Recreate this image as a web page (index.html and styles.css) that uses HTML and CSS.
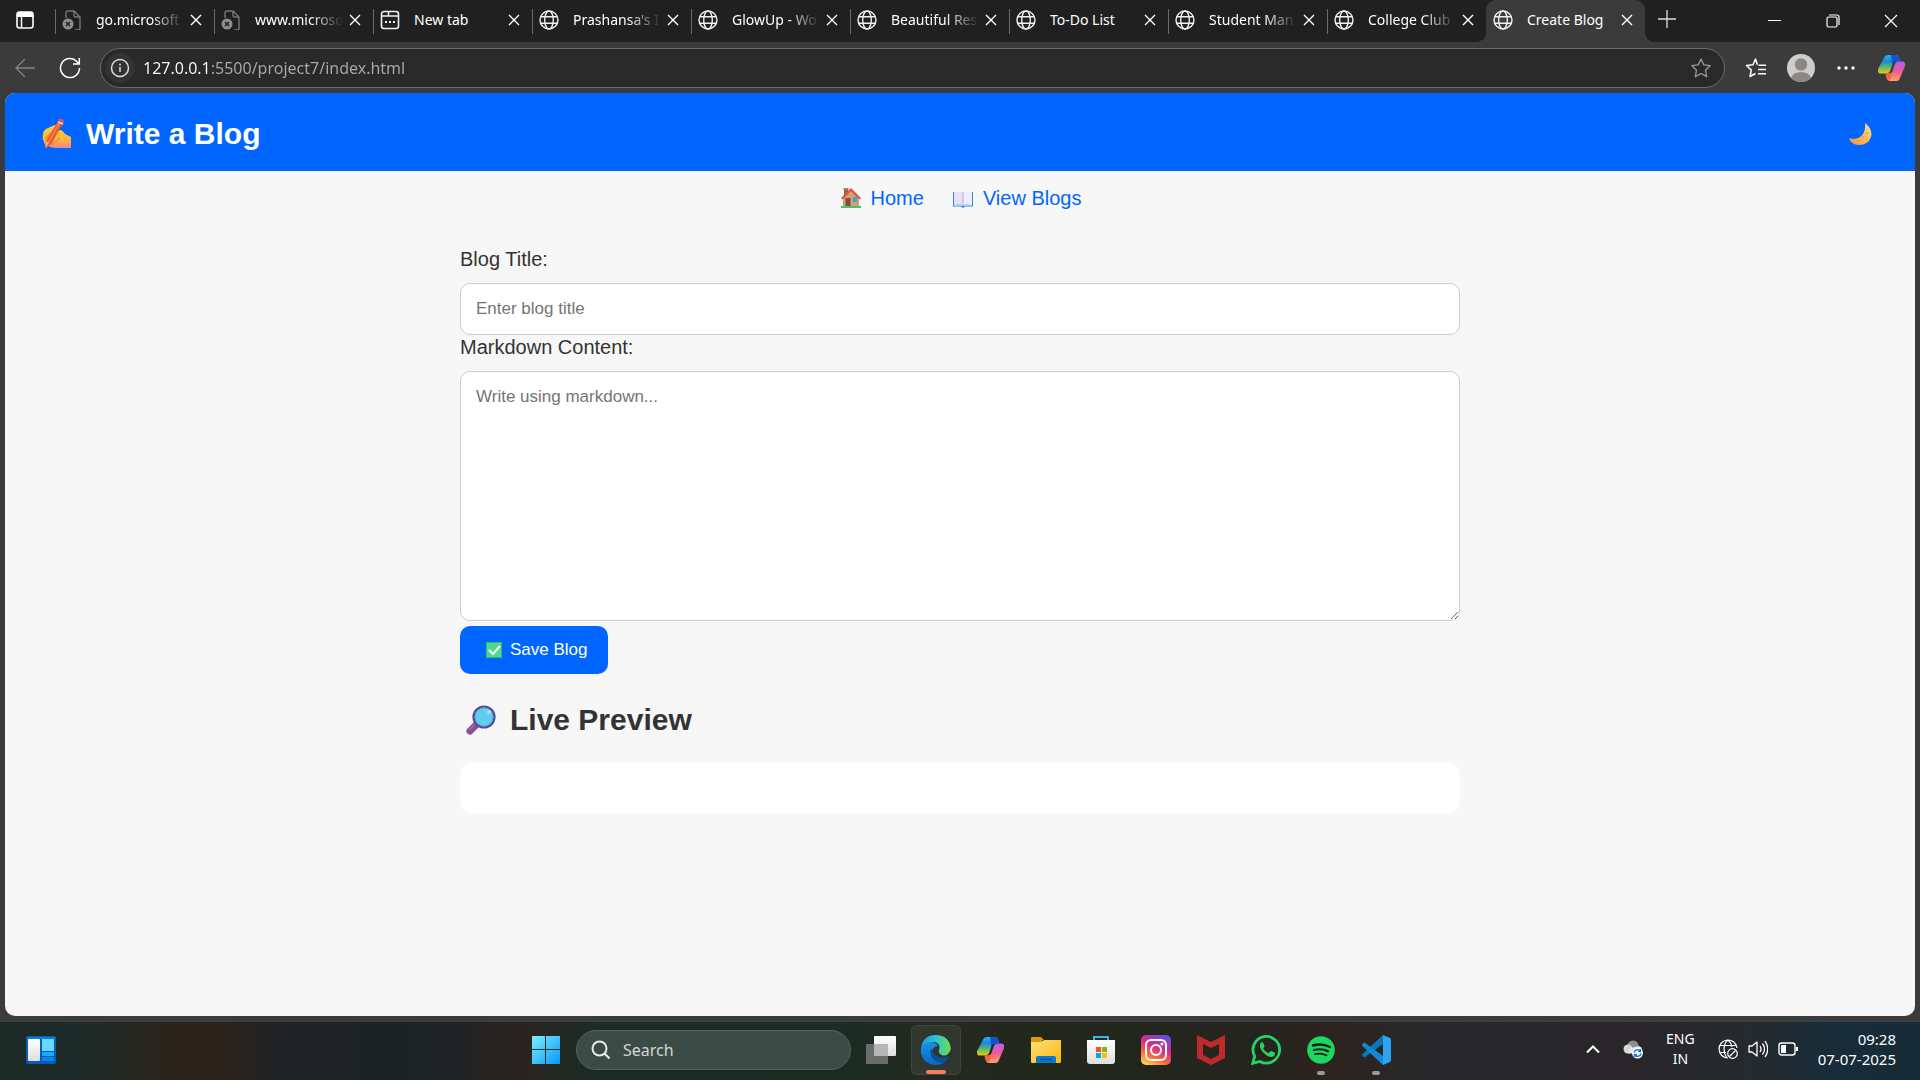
FILE: index.html
```html
<!DOCTYPE html>
<html lang="en">
<head>
<meta charset="utf-8">
<meta name="viewport" content="width=device-width, initial-scale=1">
<title>Create Blog</title>
<link rel="stylesheet" href="styles.css">
</head>
<body>
<svg class="defs" aria-hidden="true">
  <defs>
    <linearGradient id="cp-a" x1="0" y1="0" x2="0" y2="1"><stop offset="0" stop-color="#1fb4f4"/><stop offset=".35" stop-color="#1a8ad8"/><stop offset=".7" stop-color="#6cbf5a"/><stop offset="1" stop-color="#f0c80c"/></linearGradient>
    <linearGradient id="cp-b" x1="0" y1="0" x2="0" y2="1"><stop offset="0" stop-color="#b060f4"/><stop offset=".5" stop-color="#ee5a94"/><stop offset="1" stop-color="#ffa35c"/></linearGradient>
    <linearGradient id="win" x1="0" y1="0" x2="1" y2="1"><stop offset="0" stop-color="#7cf0ff"/><stop offset="1" stop-color="#0a94f8"/></linearGradient>
    <linearGradient id="edge-a" x1="0" y1="0" x2="1" y2="0"><stop offset="0" stop-color="#1d9be0"/><stop offset=".5" stop-color="#2cc3d4"/><stop offset="1" stop-color="#6fe04a"/></linearGradient>
    <linearGradient id="edge-b" x1="0" y1="0" x2="0" y2="1"><stop offset="0" stop-color="#1894e0"/><stop offset="1" stop-color="#0868c8"/></linearGradient>
    <linearGradient id="folder" x1="0" y1="0" x2="1" y2="1"><stop offset="0" stop-color="#ffe07a"/><stop offset="1" stop-color="#f8b80c"/></linearGradient>
    <linearGradient id="pale" x1="0" y1="0" x2="0" y2="1"><stop offset="0" stop-color="#ffffff"/><stop offset="1" stop-color="#dedede"/></linearGradient>
    <linearGradient id="insta" x1=".2" y1="1" x2=".7" y2="0"><stop offset="0" stop-color="#ffd056"/><stop offset=".3" stop-color="#fb6a3a"/><stop offset=".6" stop-color="#d92c84"/><stop offset="1" stop-color="#6a48d8"/></linearGradient>
    <linearGradient id="hand" x1="0" y1="0" x2="0" y2="1"><stop offset="0" stop-color="#ffd23c"/><stop offset=".65" stop-color="#fcb53e"/><stop offset="1" stop-color="#f4848c"/></linearGradient>
    <linearGradient id="moon" x1="1" y1="0" x2="0" y2="1"><stop offset="0" stop-color="#ffe38c"/><stop offset="1" stop-color="#f98e36"/></linearGradient>
    <symbol id="globe" viewBox="0 0 20 20"><g fill="none" stroke="currentColor" stroke-width="1.4"><circle cx="10" cy="10" r="9"/><ellipse cx="10" cy="10" rx="4.3" ry="9"/><path d="M1.8 6.8h16.4M1.8 13.2h16.4"/></g></symbol>
    <symbol id="badpage" viewBox="0 0 20 20"><path d="M4 8V3a2 2 0 0 1 2-2h6l6 6v11a2 2 0 0 1-2 2h-3M12 1v4.500a1.500 1.500 0 0 0 1.500 1.500H18" fill="none" stroke="#777" stroke-width="1.4"/><circle cx="6" cy="14" r="5.500" fill="#8d8d8d"/><path d="M4 12l4 4M8 12l-4 4" stroke="#202020" stroke-width="1.500"/></symbol>
    <symbol id="newtab" viewBox="0 0 20 20"><path d="M1.500 4a2.500 2.500 0 0 1 2.500-2.500h12A2.500 2.500 0 0 1 18.500 4v12a2.500 2.500 0 0 1-2.500 2.500H4A2.500 2.500 0 0 1 1.500 16zM2 6h6.500V2M8.500 6H18" fill="none" stroke="currentColor" stroke-width="1.600"/><path d="M5 11h2v2H5zM9 11h2v2H9zM13 11h2v2h-2z" fill="currentColor"/></symbol>
    <symbol id="cross" viewBox="0 0 12 12"><path d="M1 1l10 10M11 1L1 11" stroke="currentColor" stroke-width="1.400" fill="none"/></symbol>
    <symbol id="copilot" viewBox="0 0 30 28"><path d="M7 2q1-2 4-2h8q3 0 4 4l1 3h-5q-3 0-4 4l-2 6q-1 3-5 3H3q-4 0-3-5z" fill="url(#cp-a)"/><path d="M14 0h5q3 0 4 4l1 3h-5q-3 0-4 3z" fill="#1454d4"/><path d="M23 26q-1 2-4 2h-6q-3 0-4-4l-1-4h4q3 0 4-4l2-6q1-3 5-3h3q4 0 3 5z" fill="url(#cp-b)"/><path d="M8 20h4q3 0 4-3l-3 10q-3 0-4-3z" fill="#f4633a"/></symbol>
  </defs>
</svg>

<div class="browser">
  <header class="tabstrip">
    <button class="tab-actions" aria-label="Tab actions"><svg width="18" height="18" viewBox="0 0 18 18"><rect x="1" y="1" width="16" height="16" rx="2.500" fill="none" stroke="#fff" stroke-width="1.600"/><path d="M1 2.500Q1 1 3 1h12q2 0 2 2v3H1z" fill="#fff"/><path d="M5.500 6v11" stroke="#fff" stroke-width="1.500"/></svg></button>
    <div class="tabs">
      <div class="tab"><svg class="tab-icon"><use href="#badpage"/></svg><span class="tab-title tab-faded">go.microsoft</span><button class="tab-close" aria-label="Close tab"><svg><use href="#cross"/></svg></button></div>
      <div class="tab"><svg class="tab-icon"><use href="#badpage"/></svg><span class="tab-title tab-faded">www.microso</span><button class="tab-close" aria-label="Close tab"><svg><use href="#cross"/></svg></button></div>
      <div class="tab"><svg class="tab-icon"><use href="#newtab"/></svg><span class="tab-title">New tab</span><button class="tab-close" aria-label="Close tab"><svg><use href="#cross"/></svg></button></div>
      <div class="tab"><svg class="tab-icon"><use href="#globe"/></svg><span class="tab-title tab-faded">Prashansa's I</span><button class="tab-close" aria-label="Close tab"><svg><use href="#cross"/></svg></button></div>
      <div class="tab"><svg class="tab-icon"><use href="#globe"/></svg><span class="tab-title tab-faded">GlowUp - Wo</span><button class="tab-close" aria-label="Close tab"><svg><use href="#cross"/></svg></button></div>
      <div class="tab"><svg class="tab-icon"><use href="#globe"/></svg><span class="tab-title tab-faded">Beautiful Res</span><button class="tab-close" aria-label="Close tab"><svg><use href="#cross"/></svg></button></div>
      <div class="tab"><svg class="tab-icon"><use href="#globe"/></svg><span class="tab-title">To-Do List</span><button class="tab-close" aria-label="Close tab"><svg><use href="#cross"/></svg></button></div>
      <div class="tab"><svg class="tab-icon"><use href="#globe"/></svg><span class="tab-title tab-faded">Student Man</span><button class="tab-close" aria-label="Close tab"><svg><use href="#cross"/></svg></button></div>
      <div class="tab"><svg class="tab-icon"><use href="#globe"/></svg><span class="tab-title tab-faded">College Club</span><button class="tab-close" aria-label="Close tab"><svg><use href="#cross"/></svg></button></div>
      <div class="tab tab-active"><svg class="tab-icon"><use href="#globe"/></svg><span class="tab-title">Create Blog</span><button class="tab-close" aria-label="Close tab"><svg><use href="#cross"/></svg></button></div>
    </div>
    <button class="new-tab" aria-label="New tab"><svg width="18" height="18" viewBox="0 0 18 18"><path d="M9 0v18M0 9h18" stroke="#ddd" stroke-width="1.300"/></svg></button>
    <div class="window-controls">
      <button aria-label="Minimize"><svg width="14" height="14" viewBox="0 0 14 14"><path d="M0 6.500h13" stroke="#fff"/></svg></button>
      <button aria-label="Restore"><svg width="14" height="14" viewBox="0 0 14 14"><g fill="none" stroke="#fff" stroke-width="1.200"><rect x="1" y="3" width="10" height="10" rx="1.500"/><path d="M3 1h8a2 2 0 0 1 2 2v8"/></g></svg></button>
      <button aria-label="Close window"><svg width="14" height="14" viewBox="0 0 14 14"><path d="M1 1l12 12M13 1L1 13" stroke="#fff" stroke-width="1.200"/></svg></button>
    </div>
  </header>

  <div class="toolbar">
    <button class="tool back" aria-label="Back"><svg width="20" height="20" viewBox="0 0 20 20"><path d="M20 10H1M10 1l-9 9 9 9" fill="none" stroke="#858585" stroke-width="1.300"/></svg></button>
    <button class="tool reload" aria-label="Refresh"><svg width="22" height="22" viewBox="0 0 22 22"><path d="M20.500 11A9.500 9.500 0 1 1 17.800 4.400L20 7M20.300 1v6H14" fill="none" stroke="#fff" stroke-width="1.500"/></svg></button>
    <div class="address">
      <button class="site-info" aria-label="Site information"><svg width="20" height="20" viewBox="0 0 20 20"><circle cx="10" cy="10" r="8.500" fill="none" stroke="#ddd" stroke-width="1.500"/><path d="M10 9v5" stroke="#ddd" stroke-width="1.500"/><circle cx="10" cy="6.500" r="1" fill="#ddd"/></svg></button>
      <input class="url" type="text" aria-label="Address" value="127.0.0.1:5500/project7/index.html">
      <button class="star" aria-label="Add to favorites"><svg width="22" height="22" viewBox="0 0 22 22"><path d="M11 2l2.800 5.900 6.300.8-4.600 4.500 1.200 6.400L11 16.500l-5.700 3.100 1.200-6.400L1.900 8.700l6.300-.8z" fill="none" stroke="#9a9a9a" stroke-width="1.300" stroke-linejoin="round"/></svg></button>
    </div>
    <div class="toolbar-end">
      <button class="tool" aria-label="Favorites"><svg width="22" height="22" viewBox="0 0 22 22"><path d="M12.500 7.700L10.500 2 8 7.700 1.500 8.500l4.800 4.600L5 19.500l5.500-3M13.500 8.200H21M13 12.500h8M13 16.700h8" fill="none" stroke="#fff" stroke-width="1.500" stroke-linejoin="round"/></svg></button>
      <button class="tool" aria-label="Profile"><svg width="28" height="28" viewBox="0 0 28 28"><circle cx="14" cy="14" r="14" fill="#cfcdca"/><circle cx="14" cy="10.500" r="6.200" fill="#8b8785"/><path d="M4 24q2-6 10-6t10 6q-4 4-10 4T4 24z" fill="#8b8785"/></svg></button>
      <button class="tool" aria-label="Settings and more"><svg width="18" height="6" viewBox="0 0 18 6"><g fill="#fff"><circle cx="2" cy="3" r="1.700"/><circle cx="9" cy="3" r="1.700"/><circle cx="16" cy="3" r="1.700"/></g></svg></button>
      <button class="tool tool-copilot" aria-label="Copilot"><svg width="28" height="26"><use href="#copilot"/></svg></button>
    </div>
  </div>

  <div class="page">
    <header class="blog-header">
      <h1><svg width="30" height="30" viewBox="0 0 30 30" role="img" aria-label="Writing hand"><path d="M1 15q0-4 5-6l7-3q4-1 3 2l-2 4 5-1q2 1 4 4l6 3v11H14q-4 0-8-2-5-2-4-5-2-1-1-7z" fill="url(#hand)"/><path d="M9 14l-6 6M13 17l-7 8M18 19l-8 7" stroke="#e68a2c" stroke-width="1.200"/><path d="M16 2l5 2-11 20-5 5-2-1 1-6z" fill="#ee5a35"/><path d="M18 3L6 24" stroke="#ff8a56" stroke-width="1.300"/><path d="M17 0q3-1 5 2l-1 3-5-2z" fill="#f04e58"/><path d="M16 3l5 2" stroke="#ddd" stroke-width="1.500"/><path d="M4 22l3 2-4 5z" fill="#f4b183"/></svg>Write a Blog</h1>
      <button class="theme" aria-label="Toggle dark mode"><svg width="24" height="24" viewBox="0 0 24 24"><path d="M17 1Q25 7 23 15q-3 8-12 8Q3 23 1 16q9 3 14-4 3-5 2-11z" fill="url(#moon)"/><g fill="#eeaa42"><circle cx="19" cy="11" r="1.200"/><circle cx="15" cy="15" r="1.500"/><circle cx="10" cy="19" r="1.300"/><circle cx="18" cy="18" r="1"/></g></svg></button>
    </header>
    <nav class="blog-nav">
      <a href="#home"><svg width="20" height="20" viewBox="1 1 20 20" aria-hidden="true"><path d="M4 2h4v7H4z" fill="#9a6248"/><path d="M3.500 1h5v2h-5z" fill="#b87a5a"/><path d="M3 10l8-8 8 8v10H3z" fill="#d99f6c"/><path d="M1 11L11 1l10 10-1.500 1.500L11 4l-8.500 8.500z" fill="#e0503c"/><path d="M5.500 11h5v9h-5z" fill="#7a5145"/><path d="M13 10h4v5h-4z" fill="#2ea4ee"/><path d="M1 19h20v2H1z" fill="#46c46c"/></svg>Home</a>
      <a href="#blogs"><svg width="20" height="20" viewBox="1 1 20 20" aria-hidden="true"><path d="M1 5h20v14.500h-8l-2 1.500-2-1.500H1z" fill="#2c8ad0"/><path d="M2 17h18v2H2z" fill="#a8cdee"/><path d="M2 5q5-1 9 0v13q-4-2-9 0z" fill="#e7e0f8"/><path d="M20 5q-5-1-9 0v13q4-2 9 0z" fill="#f2edfd"/><path d="M11 5v13" stroke="#b8b0d0"/></svg>View Blogs</a>
    </nav>
    <main class="editor">
      <form>
        <label for="title">Blog Title:</label>
        <input id="title" class="field" type="text" placeholder="Enter blog title">
        <label for="content">Markdown Content:</label>
        <textarea id="content" class="field" placeholder="Write using markdown..."></textarea>
        <button class="save" type="button"><svg width="16" height="16" viewBox="0 0 16 16" aria-hidden="true"><path d="M0 0h16v16H0z" fill="#38b876"/><path d="M1 1h14v14H1z" fill="#50d890"/><path d="M3 8l4 4 7-8" fill="none" stroke="#fff" stroke-width="2"/></svg>Save Blog</button>
      </form>
      <h2><svg width="30" height="30" viewBox="0 0 30 30" aria-hidden="true"><path d="M12 18l-8 8" stroke="#8c4c96" stroke-width="7" stroke-linecap="round"/><path d="M10 18l-7 7" stroke="#a868ac" stroke-width="1.500"/><circle cx="18" cy="12" r="10.500" fill="#63cdec" stroke="#574a92" stroke-width="2.200"/><circle cx="18" cy="12" r="9" fill="none" stroke="#4cabd8"/><circle cx="23" cy="7" r="2" fill="#a6e4f6"/></svg>Live Preview</h2>
      <section class="preview" aria-label="Live preview"></section>
    </main>
  </div>
</div>

<footer class="taskbar">
  <div class="task-start">
    <button aria-label="Widgets"><svg width="30" height="28" viewBox="0 0 30 28"><rect width="30" height="28" rx="2" fill="#0c5cb0"/><path d="M1 1h28v2H1z" fill="#0c7cd4"/><rect x="2" y="3" width="12" height="22" rx="1" fill="url(#pale)"/><path d="M16 3h12v12H16z" fill="#66d8ff"/><path d="M16 16h12v4H16z" fill="#20a8fc"/><path d="M16 21h12v4H16z" fill="#0488f0"/></svg></button>
  </div>
  <div class="task-apps">
    <button class="app" aria-label="Start"><svg width="30" height="30" viewBox="0 0 30 30"><path d="M1 1h13v13H1zM15 1h14v13H15zM1 15h13v14H1zM15 15h14v14H15z" fill="url(#win)"/></svg></button>
    <label class="search"><svg width="20" height="20" viewBox="0 0 20 20" aria-hidden="true"><circle cx="8.500" cy="8.500" r="7" fill="none" stroke="#e6eaea" stroke-width="2"/><path d="M13.500 13.500l5 5" stroke="#e6eaea" stroke-width="2.300"/></svg><input type="text" placeholder="Search" aria-label="Search"></label>
    <button class="app" aria-label="Task view"><svg width="30" height="28" viewBox="0 0 30 28"><rect x="0" y="8" width="22" height="20" rx="1" fill="#6c6c6c"/><rect x="8" y="0" width="22" height="20" rx="1" fill="url(#pale)"/><path d="M8 8h14v12H8z" fill="#b6b6b6"/></svg></button>
    <button class="app app-current" aria-label="Microsoft Edge"><svg width="30" height="30" viewBox="0 0 30 30"><path d="M0 13Q2 0 15 0q9 0 13 7 4 8-1 12-4 3-8 0-2-2-1-4 2-6-4-8-8-1-14 6z" fill="url(#edge-a)"/><path d="M0 13q5-7 11-6 5 1 6 4-6 0-6 7 1 9 13 9-4 3-9 3Q3 30 0 18z" fill="url(#edge-b)"/><path d="M11 13q-4 5 1 11 6 6 12 3 3-2 4-6-5 3-10 1-8-3-7-9z" fill="#0c4f9c"/></svg></button>
    <button class="app" aria-label="Copilot"><svg width="28" height="26"><use href="#copilot"/></svg></button>
    <button class="app" aria-label="File Explorer"><svg width="30" height="28" viewBox="0 0 30 28"><path d="M0 2q0-1 1-1h9l3 3h-2v5H0z" fill="#dc9a08"/><path d="M0 6h10l3-2h17v22q0 1-1 1H1q-1 0-1-1z" fill="url(#folder)"/><path d="M5 27v-5q0-2 2-2h16q2 0 2 2v5z" fill="#0c78cc"/><path d="M9 23.500h12" stroke="#06539a" stroke-width="1.500"/></svg></button>
    <button class="app" aria-label="Microsoft Store"><svg width="30" height="30" viewBox="0 0 30 30"><path d="M8 7V2h14v5" fill="none" stroke="#2cbcec" stroke-width="2"/><path d="M1 5h28v21q0 3-3 3H4q-3 0-3-3z" fill="url(#pale)"/><path d="M10 12h5v5h-5z" fill="#f1511b"/><path d="M16 12h5v5h-5z" fill="#80bc06"/><path d="M10 18h5v5h-5z" fill="#05a6f0"/><path d="M16 18h5v5h-5z" fill="#fdba08"/></svg></button>
    <button class="app" aria-label="Instagram"><svg width="30" height="30" viewBox="0 0 30 30"><rect width="30" height="30" rx="5" fill="url(#insta)"/><g fill="none" stroke="#fff" stroke-width="2"><rect x="5" y="5" width="20" height="20" rx="5"/><circle cx="15" cy="15" r="5"/></g><circle cx="21" cy="9" r="1.500" fill="#fff"/></svg></button>
    <button class="app" aria-label="McAfee"><svg width="28" height="30" viewBox="0 0 28 30"><path d="M0 0l14 7 14-7v23l-14 7-14-7zM6 9v11l8 4 8-4V9l-8 4z" fill="#c02a2c" fill-rule="evenodd"/></svg></button>
    <button class="app" aria-label="WhatsApp"><svg width="30" height="30" viewBox="0 0 30 30"><path d="M1.700 28.300l2-7A13.300 13.300 0 1 1 9 26.500z" fill="none" stroke="#25d366" stroke-width="2.800"/><path d="M10 7.500q1-1 2 0l1.500 3.500q0 1-1.500 2.500 2 3.500 5.500 4.800l2-2q.5-.5 1.500 0l3 1.500q.5 3-2.500 4-4 1-9-4-5.500-6-2.500-10.300z" fill="#25d366"/></svg></button>
    <button class="app app-open" aria-label="Spotify"><svg width="28" height="28" viewBox="0 0 28 28"><circle cx="14" cy="14" r="13.800" fill="#1ed760"/><g fill="none" stroke="#17241b" stroke-linecap="round"><path d="M6 9.500q9-2.500 17 1.500" stroke-width="2.500"/><path d="M7 14q8-2 14 1.300" stroke-width="2.200"/><path d="M8 18.200q6-1.700 11.500 1.200" stroke-width="1.800"/></g></svg></button>
    <button class="app app-open" aria-label="Visual Studio Code"><svg width="30" height="30" viewBox="0 0 30 30"><path d="M22 9v-9L2 18.500q-2 1 0 3l1.500 1z" fill="#0c76bc"/><path d="M22 21v9L2 11.500q-2-1 0-3l1.500-1z" fill="#118ad4"/><path d="M22 0l7 3q1 .5 1 2v20q0 1.500-1 2l-7 3z" fill="#2ba4f2"/></svg></button>
  </div>
  <div class="task-tray">
    <button class="overflow" aria-label="Show hidden icons"><svg width="14" height="10" viewBox="0 0 14 10"><path d="M1 8.500l6-6 6 6" fill="none" stroke="#fff" stroke-width="2"/></svg></button>
    <button aria-label="OneDrive"><svg width="20" height="20" viewBox="0 0 20 20"><circle cx="10" cy="7" r="5.500" fill="#8f8f8f"/><circle cx="5" cy="10" r="4.500" fill="#d8d8d8"/><path d="M5 14.500h12a4 4 0 0 0-1-7.500L8 9z" fill="#e8e8e8"/><circle cx="14.500" cy="14" r="5.500" fill="#fff"/><path d="M11 13.500a3.700 3.700 0 0 1 6.500-1.500M18 14.500a3.700 3.700 0 0 1-6.500 1.500M17.500 10v2.500H15M11.500 18v-2.500H14" fill="none" stroke="#1478d0" stroke-width="1.400"/></svg></button>
    <button class="language">ENG<br>IN</button>
    <button class="status" aria-label="Network, volume and battery">
      <svg width="20" height="20" viewBox="0 0 20 20"><g fill="none" stroke="#fff" stroke-width="1.200"><path d="M10 19A9 9 0 1 1 19 9M9 19q-3-4-3-9 0-6 4-9 3.500 3 4 7M2 6.500h16M2 13.500h6"/><circle cx="14.500" cy="14.500" r="4.800"/><path d="M11.500 17.500l6-6"/></g></svg>
      <svg width="20" height="20" viewBox="0 0 20 20"><path d="M1 7h3l5-4v14l-5-4H1zM12 7q2 3 0 6M14.500 4.500q4 5.500 0 11M17 2q5.500 8 0 16" fill="none" stroke="#fff" stroke-width="1.300" stroke-linejoin="round"/></svg>
      <svg width="20" height="20" viewBox="0 0 20 20"><rect x="1" y="4" width="16" height="12" rx="2.500" fill="none" stroke="#fff" stroke-width="1.400"/><path d="M3 6h5v8H3zM18 8h2v4h-2z" fill="#fff"/></svg>
    </button>
    <button class="clock"><time datetime="2025-07-07T09:28">09:28<br>07-07-2025</time></button>
  </div>
</footer>
</body>
</html>
```
FILE: styles.css
```css
* {
  box-sizing: border-box;
}

body {
  margin: 0;
  min-height: 100vh;
  display: flex;
  flex-direction: column;
  background: #3b3b3b;
  font-family: "Noto Sans", "Open Sans", sans-serif;
}

button {
  display: flex;
  align-items: center;
  justify-content: center;
  padding: 0;
  border: 0;
  background: none;
  color: inherit;
  font: inherit;
  cursor: pointer;
}

svg {
  display: block;
  flex: none;
}

.defs {
  position: absolute;
  width: 0;
  height: 0;
}

.browser {
  flex: 1;
  display: flex;
  flex-direction: column;
}

/* Tab strip */
.tabstrip {
  display: flex;
  height: 42px;
  background: #202020;
  color: #fff;
}

.tab-actions {
  width: 55px;
  padding: 0 6px 2px 0;
}

.tabs {
  flex: 0 1 1590px;
  display: flex;
  min-width: 0;
}

.tab {
  position: relative;
  flex: 1 1 0;
  min-width: 0;
  display: flex;
  align-items: center;
  padding: 0 12px 2px 7px;
}

.tab:not(.tab-active)::before {
  content: "";
  position: absolute;
  left: 0;
  top: 9px;
  width: 1px;
  height: 25px;
  background: #6a6a6a;
}

.tab-icon {
  width: 20px;
  height: 20px;
  color: #f0f0f0;
}

.tab-title {
  flex: 1;
  margin: 0 6px 0 14px;
  overflow: hidden;
  white-space: nowrap;
  font-size: 14px;
  line-height: 20px;
}

.tab-faded {
  mask-image: linear-gradient(90deg, #000 55px, transparent 88px);
}

.tab-close svg {
  width: 12px;
  height: 12px;
}

.tab-active {
  border-radius: 10px 10px 0 0;
  background: #3b3b3b;
}

.tab-active::before,
.tab-active::after {
  content: "";
  position: absolute;
  bottom: 0;
  width: 10px;
  height: 10px;
}

.tab-active::before {
  right: 100%;
  background: radial-gradient(circle at 0 0, transparent 10px, #3b3b3b 10px);
}

.tab-active::after {
  left: 100%;
  background: radial-gradient(circle at 100% 0, transparent 10px, #3b3b3b 10px);
}

.new-tab {
  width: 44px;
  padding-bottom: 4px;
}

.window-controls {
  display: flex;
  margin-left: auto;
}

.window-controls button {
  width: 58px;
}

/* Toolbar */
.toolbar {
  display: flex;
  align-items: center;
  height: 51px;
  padding-left: 2px;
}

.tool {
  width: 45px;
  height: 40px;
}

.reload {
  margin-right: 8px;
}

.address {
  flex: 1;
  display: flex;
  align-items: center;
  height: 40px;
  padding: 0 12px 0 4px;
  border: 1px solid #6c6c6c;
  border-radius: 20px;
  background: #292929;
}

.site-info {
  width: 30px;
  height: 30px;
  border-radius: 50%;
  background: #333;
}

.url {
  flex: 1;
  min-width: 0;
  height: 30px;
  margin-left: 8px;
  padding: 0;
  border: 0;
  outline: 0;
  background: linear-gradient(90deg, #fff 67px, #aaa 67px);
  background-clip: text;
  color: transparent;
  font: 16px/30px "Noto Sans", "Open Sans", sans-serif;
}

.toolbar-end {
  display: flex;
  padding: 0 4px 0 8px;
}

.tool-copilot {
  width: 48px;
}

/* Blog page */
.page {
  flex: 1;
  margin: 0 5px 5px;
  border-radius: 10px;
  overflow: hidden;
  background: #f7f7f7;
  color: #333;
  font-family: "Liberation Sans", Arial, sans-serif;
  font-size: 20px;
  line-height: 24px;
}

.blog-header {
  display: flex;
  align-items: center;
  justify-content: space-between;
  padding: 22px 43px 18px 37px;
  background: #0066ff;
  color: #fff;
}

.blog-header h1 {
  display: flex;
  align-items: center;
  gap: 14px;
  margin: 0;
  font-size: 30px;
  line-height: 38px;
}

.blog-nav {
  display: flex;
  justify-content: center;
  gap: 29px;
  padding: 15px 15px 15px 17px;
}

.blog-nav a {
  display: flex;
  align-items: center;
  gap: 10px;
  color: #0066ff;
  text-decoration: none;
}

.editor {
  max-width: 1000px;
  margin: 0 auto;
  padding: 22px 0;
}

.editor label {
  display: block;
  margin-bottom: 12px;
}

.field {
  display: block;
  width: 100%;
  height: 52px;
  padding: 15px;
  border: 1px solid #ccc;
  border-radius: 10px;
  background: #fff;
  font: 17px/20px "Liberation Sans", Arial, sans-serif;
}

.field::placeholder {
  color: #757575;
}

textarea.field {
  height: 250px;
  resize: both;
}

.save {
  height: 48px;
  margin-top: 5px;
  padding: 0 20px 0 26px;
  gap: 8px;
  border-radius: 10px;
  background: #0066ff;
  color: #fff;
  font-size: 17px;
}

.editor h2 {
  display: flex;
  align-items: center;
  gap: 14px;
  margin: 28px 0 25px;
  padding-left: 6px;
  font-size: 30px;
  line-height: 36px;
}

.preview {
  min-height: 50px;
  border-radius: 12px;
  background: #fff;
}

/* Taskbar */
.taskbar {
  display: grid;
  grid-template-columns: 1fr auto 1fr;
  align-items: center;
  height: 59px;
  padding-bottom: 2px;
  border-top: 1px solid #414141;
  background: linear-gradient(90deg, #1b2a25 0%, #1c2b28 4%, #2c231b 9%, #2d221a 11%, #222326 14%, #1c2325 20%, #202424 24%, #2b2320 27%, #1a2c25 31%, #1a2c24 44%, #232a20 48%, #22271c 54%, #24251f 65%, #2d221e 69%, #27282a 74%, #292629 85%, #252a2e 91%, #182c38 95%, #162b38 100%);
  color: #fff;
}

.task-start {
  padding-left: 26px;
}

.task-apps {
  display: flex;
  align-items: center;
  gap: 5px;
  padding-left: 2px;
}

.app {
  position: relative;
  width: 50px;
  height: 50px;
  border-radius: 6px;
}

.app-current {
  background: #ffffff10;
  border: 1px solid #ffffff14;
}

.app-current::after,
.app-open::after {
  content: "";
  position: absolute;
  bottom: 0;
  width: 8px;
  height: 4px;
  border-radius: 2px;
  background: #999;
}

.app-current::after {
  width: 20px;
  background: #f47e62;
}

.search {
  display: flex;
  align-items: center;
  gap: 12px;
  width: 275px;
  height: 40px;
  padding: 0 14px;
  border: 1px solid #56645d;
  border-radius: 20px;
  background: #3b4b45;
}

.search input {
  flex: 1;
  min-width: 0;
  padding: 0;
  border: 0;
  outline: 0;
  background: none;
  color: #fff;
  font: 16px/24px "Noto Sans", "Open Sans", sans-serif;
}

.search input::placeholder {
  color: #d2d8d5;
}

.task-tray {
  display: flex;
  align-items: center;
  justify-content: flex-end;
  gap: 20px;
  padding: 0 24px 2px 0;
  font-size: 15px;
  line-height: 20px;
}

.overflow {
  margin-right: 3px;
}

.language {
  margin: 0 3px;
  font-size: 14px;
}

.status {
  gap: 10px;
}

.clock {
  text-align: right;
}
```
